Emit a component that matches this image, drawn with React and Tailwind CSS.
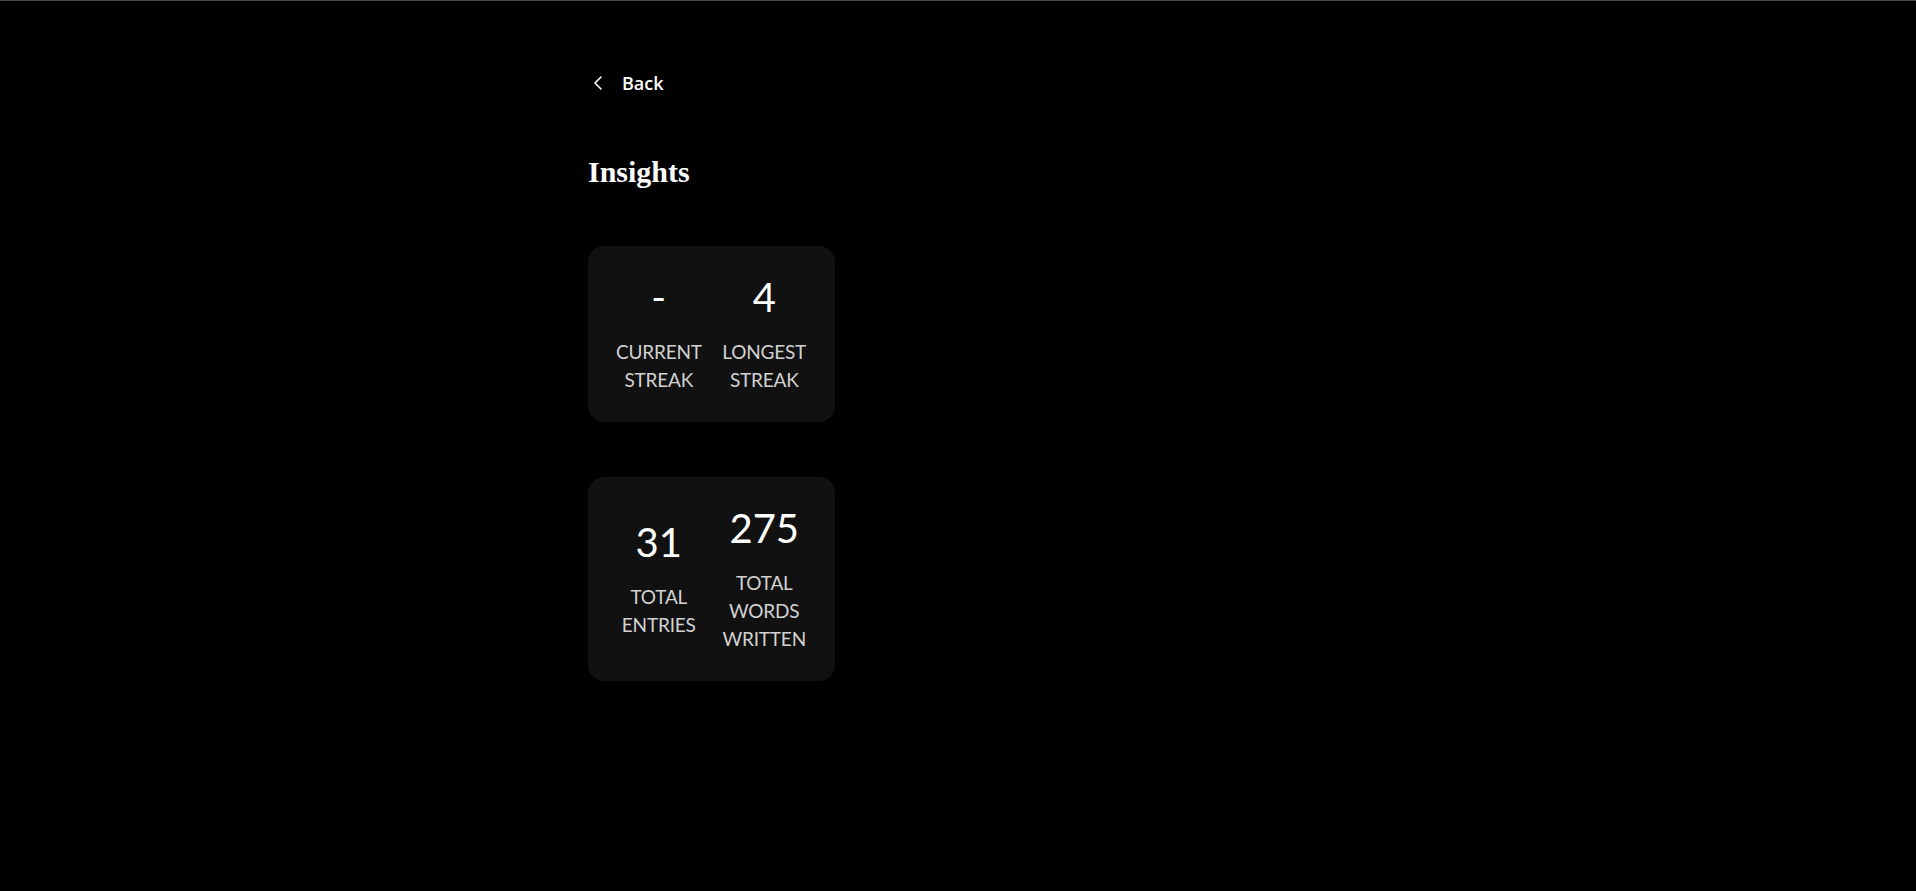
import React from 'react';
import { ChevronLeft } from 'lucide-react';

const stats = [
  [
    { value: '-', label: 'CURRENT STREAK' },
    { value: '4', label: 'LONGEST STREAK' },
  ],
  [
    { value: '31', label: 'TOTAL ENTRIES' },
    { value: '275', label: 'TOTAL WORDS WRITTEN' },
  ],
];

function StatCard({ items }) {
  return (
    <div className="w-[247px] rounded-2xl bg-[#111111] px-6 pt-[31px] pb-[28px] grid grid-cols-2 gap-x-3 items-center">
      {items.map((s) => (
        <div key={s.label} className="flex flex-col items-center text-center">
          <p className="text-[40px] leading-10 text-white font-normal">{s.value}</p>
          <p className="mt-[21px] text-[19px] leading-7 tracking-[-0.2px] text-[#d2d2d2] px-1">{s.label}</p>
        </div>
      ))}
    </div>
  );
}

export default function App() {
  return (
    <div className="min-h-screen bg-black border-t border-[#4a4a4a]" style={{ fontFamily: 'Lato, "Open Sans", sans-serif' }}>
      <div className="mx-auto w-[740px] pt-[68px] pb-20">
        {/* back link */}
        <button className="flex items-center gap-3 -ml-0.5 text-white">
          <ChevronLeft size={24} strokeWidth={1.6} />
          <span className="text-lg leading-7 font-semibold" style={{ fontFamily: '"Open Sans", sans-serif' }}>Back</span>
        </button>

        <h1 className="mt-[57px] text-[30px] leading-9 font-bold text-white" style={{ fontFamily: '"Liberation Serif", serif' }}>
          Insights
        </h1>

        <div className="mt-[56px] flex flex-col gap-[55px]">
          {stats.map((items, i) => (
            <StatCard key={i} items={items} />
          ))}
        </div>
      </div>
    </div>
  );
}
